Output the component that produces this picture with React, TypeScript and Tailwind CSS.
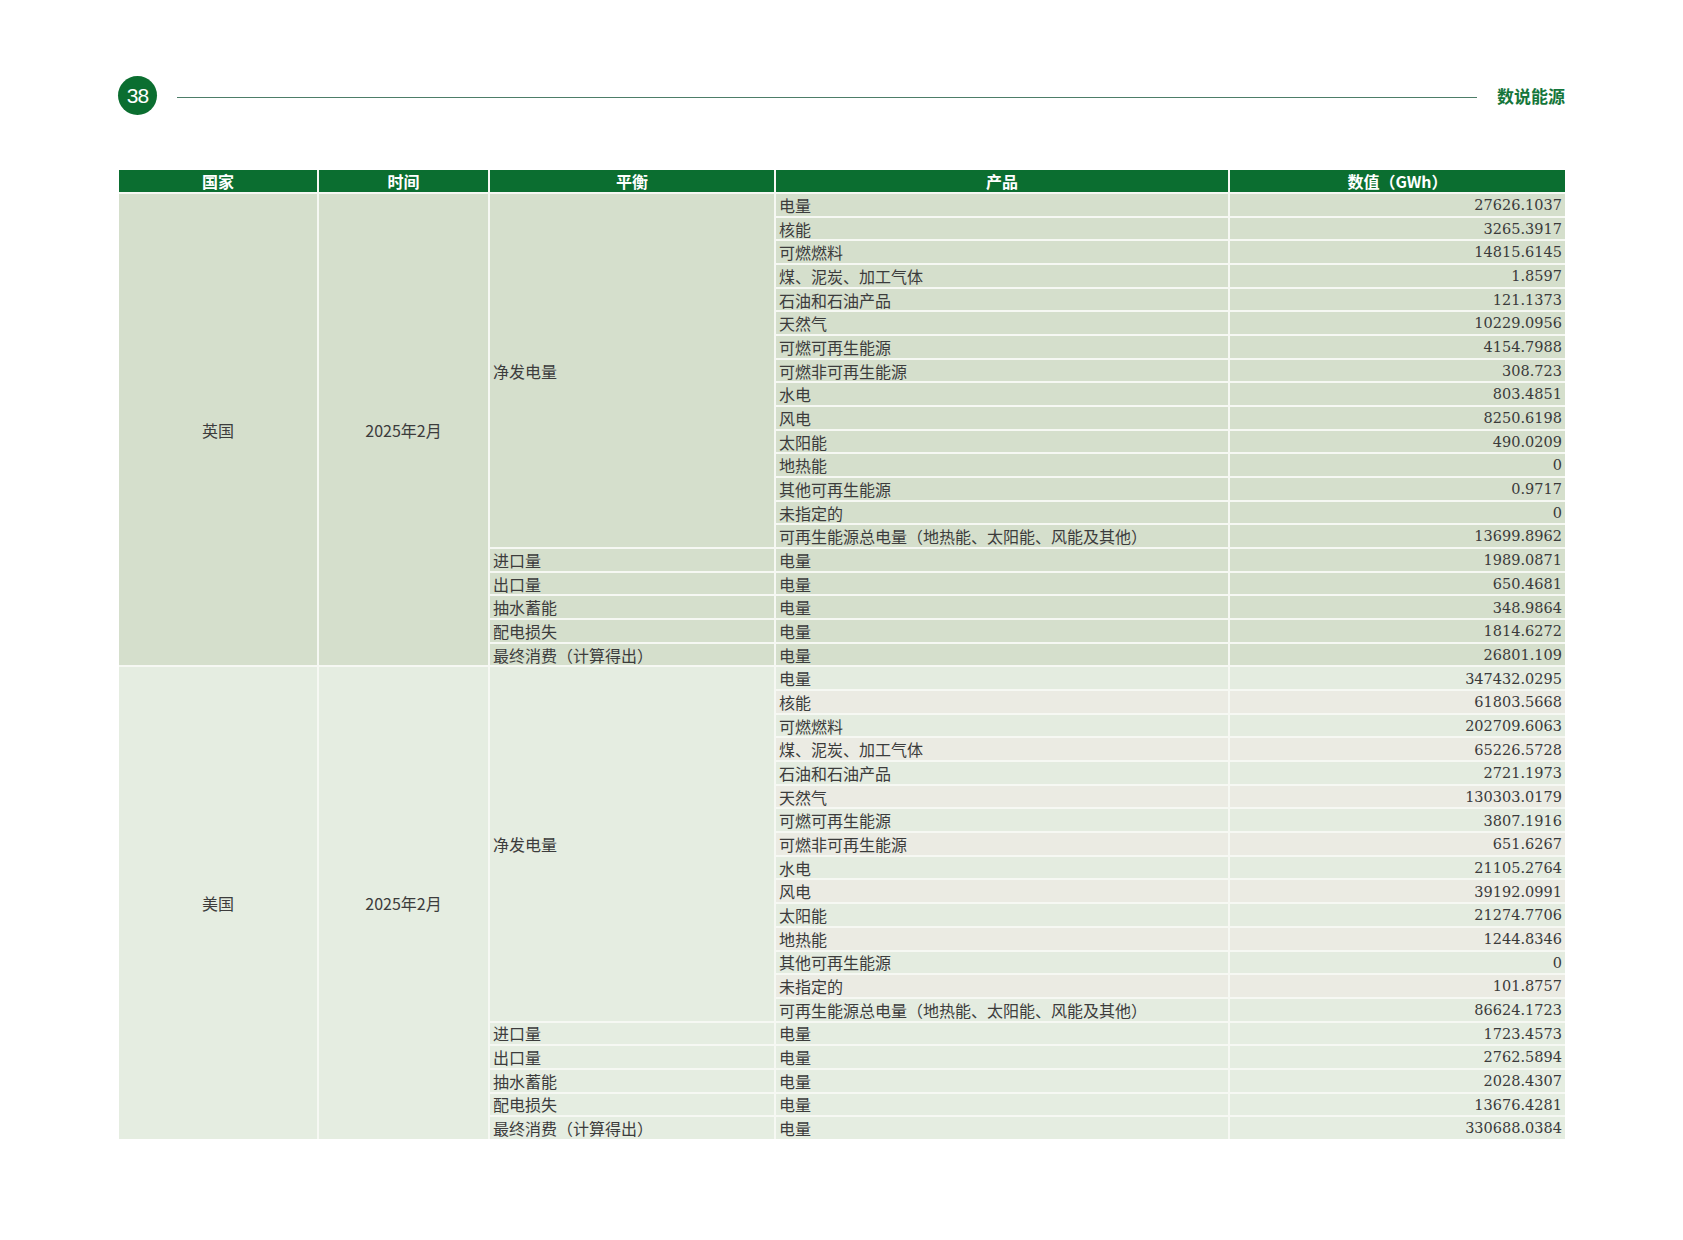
import React from "react";

type Row = [string, string];

const ukNet: Row[] = [
  ["电量", "27626.1037"],
  ["核能", "3265.3917"],
  ["可燃燃料", "14815.6145"],
  ["煤、泥炭、加工气体", "1.8597"],
  ["石油和石油产品", "121.1373"],
  ["天然气", "10229.0956"],
  ["可燃可再生能源", "4154.7988"],
  ["可燃非可再生能源", "308.723"],
  ["水电", "803.4851"],
  ["风电", "8250.6198"],
  ["太阳能", "490.0209"],
  ["地热能", "0"],
  ["其他可再生能源", "0.9717"],
  ["未指定的", "0"],
  ["可再生能源总电量（地热能、太阳能、风能及其他）", "13699.8962"],
];
const ukOther: Row[] = [
  ["进口量", "1989.0871"],
  ["出口量", "650.4681"],
  ["抽水蓄能", "348.9864"],
  ["配电损失", "1814.6272"],
  ["最终消费（计算得出）", "26801.109"],
];
const usNet: Row[] = [
  ["电量", "347432.0295"],
  ["核能", "61803.5668"],
  ["可燃燃料", "202709.6063"],
  ["煤、泥炭、加工气体", "65226.5728"],
  ["石油和石油产品", "2721.1973"],
  ["天然气", "130303.0179"],
  ["可燃可再生能源", "3807.1916"],
  ["可燃非可再生能源", "651.6267"],
  ["水电", "21105.2764"],
  ["风电", "39192.0991"],
  ["太阳能", "21274.7706"],
  ["地热能", "1244.8346"],
  ["其他可再生能源", "0"],
  ["未指定的", "101.8757"],
  ["可再生能源总电量（地热能、太阳能、风能及其他）", "86624.1723"],
];
const usOther: Row[] = [
  ["进口量", "1723.4573"],
  ["出口量", "2762.5894"],
  ["抽水蓄能", "2028.4307"],
  ["配电损失", "13676.4281"],
  ["最终消费（计算得出）", "330688.0384"],
];

const txt =
  "flex items-center pl-[3px] text-[16px] leading-none text-[#3c3c3c] whitespace-nowrap";
const numCls =
  "flex items-center justify-end pr-[3px] pt-[1px] text-[14.5px] leading-none text-[#3a3a3a] font-['DejaVu_Serif','Liberation_Serif',serif]";

function Section({
  country,
  net,
  other,
  uk,
}: {
  country: string;
  net: Row[];
  other: Row[];
  uk: boolean;
}) {
  const base = uk ? "bg-[#d5dfcc]" : "bg-[#e5ede1]";
  const rowBg = (i: number) =>
    uk ? "bg-[#d5dfcc]" : i % 2 === 1 ? "bg-[#ebebe3]" : "bg-[#e4ece0]";
  return (
    <>
      <div className={`${base} row-span-20 flex items-center justify-center text-[16px] text-[#3c3c3c]`}>
        {country}
      </div>
      <div className={`${base} row-span-20 flex items-center justify-center text-[16px] text-[#3c3c3c]`}>
        2025年2月
      </div>
      <div className={`${base} row-span-15 ${txt}`}>净发电量</div>
      {net.map(([p, v], i) => (
        <React.Fragment key={"n" + i}>
          <div className={`${rowBg(i)} col-start-4 ${txt}`}>{p}</div>
          <div className={`${rowBg(i)} ${numCls}`}>{v}</div>
        </React.Fragment>
      ))}
      {other.map(([b, v], i) => (
        <React.Fragment key={"o" + i}>
          <div className={`${base} col-start-3 ${txt}`}>{b}</div>
          <div className={`${base} ${txt}`}>电量</div>
          <div className={`${base} ${numCls}`}>{v}</div>
        </React.Fragment>
      ))}
    </>
  );
}

export default function App() {
  const headers = ["国家", "时间", "平衡", "产品", "数值（GWh）"];
  return (
    <div className="w-[1683px] h-[1240px] bg-white font-['Noto_Sans_CJK_SC','Noto_Sans',sans-serif]">
      <div className="pl-[118px] pt-[76px] w-[1565px]">
        <div className="flex items-center">
          <div className="w-[39px] h-[39px] rounded-full bg-[#0b6e30] flex items-center justify-center text-white text-[21px] tracking-[-1px] font-['Liberation_Sans',Arial,sans-serif]">
            38
          </div>
          <div className="flex-1 h-[1.5px] bg-[#4d7d68] ml-[20px] mr-[20px] mt-[4px]" />
          <div className="text-[17px] leading-none font-bold text-[#15763a]">数说能源</div>
        </div>
      </div>
      <div className="ml-[119px] mt-[55px] w-[1446px]">
        <div className="grid grid-cols-[198px_169px_284px_452px_335px] grid-rows-[22px] auto-rows-[21.675px] gap-[2px] bg-[#f6f8f3]">
          {headers.map((h) => (
            <div
              key={h}
              className="bg-[#0b6e30] flex items-center justify-center text-white text-[16px] font-bold leading-none"
            >
              {h}
            </div>
          ))}
          <Section country="英国" net={ukNet} other={ukOther} uk={true} />
          <Section country="美国" net={usNet} other={usOther} uk={false} />
        </div>
      </div>
    </div>
  );
}
